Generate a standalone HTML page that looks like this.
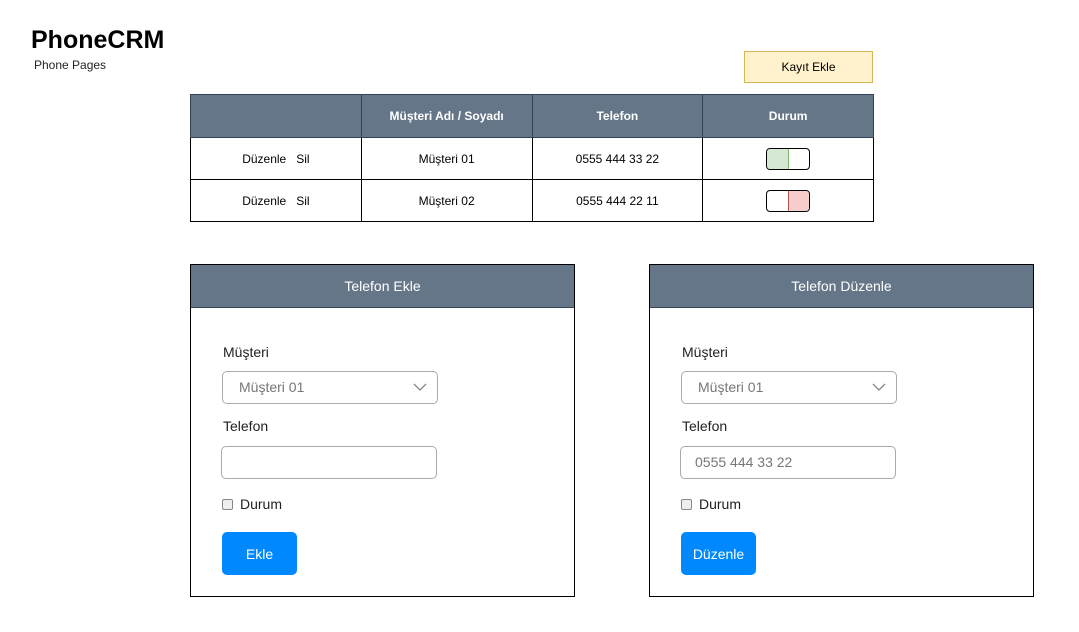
<!DOCTYPE html>
<html><head><meta charset="utf-8"><style>
*{box-sizing:border-box;margin:0;padding:0}
body{width:1079px;height:632px;background:#fff;font-family:"Liberation Sans",sans-serif;position:relative;overflow:hidden;color:#000}
.a{position:absolute}
.title{left:31px;top:26px;font-size:25px;font-weight:bold}
.sub{left:34px;top:58px;font-size:12px;color:#222}
.kayit{left:744px;top:51px;width:129px;height:32px;background:#fff2cc;border:1px solid #d6b656;font-size:12px;display:flex;align-items:center;justify-content:center}
table{position:absolute;left:190px;top:94px;border-collapse:collapse;font-size:12px;table-layout:fixed;width:684px}
td,th{border:1px solid #000;text-align:center;height:42px}
th{background:#647687;color:#fff;font-size:12px;font-weight:bold;height:43px;border-color:#314354}
.tg{display:inline-flex;width:44px;height:22px;border:1px solid #000;border-radius:4px;overflow:hidden;vertical-align:middle}
.tg span{flex:1}
.panel{position:absolute;top:264px;width:385px;height:333px;border:1px solid #000}
.ph{height:43px;background:#647687;color:#fff;font-size:14px;display:flex;align-items:center;justify-content:center;border-bottom:1px solid #314354}
.lbl{position:absolute;font-size:14px;color:#222}
.sel{position:absolute;left:31px;top:106px;width:216px;height:33px;border:1px solid #aaa;border-radius:5px;font-size:14px;color:#777;padding:7px 0 0 16px}
.inp{position:absolute;left:30px;top:181px;width:216px;height:33px;border:1px solid #aaa;border-radius:5px;font-size:14px;color:#777;padding:7px 0 0 14px}
.cb{position:absolute;left:31px;top:234px;width:11px;height:11px;border:1px solid #888;border-radius:2px;background:#eee}
.btn{position:absolute;left:31px;top:267px;width:75px;height:43px;background:#0088ff;border-radius:5px;color:#fff;font-size:14px;display:flex;align-items:center;justify-content:center}
</style></head><body>
<div class="a title">PhoneCRM</div>
<div class="a sub">Phone Pages</div>
<div class="a kayit">Kayıt Ekle</div>
<table>
<tr><th></th><th>Müşteri Adı / Soyadı</th><th>Telefon</th><th>Durum</th></tr>
<tr><td>Düzenle &nbsp; Sil</td><td>Müşteri 01</td><td>0555 444 33 22</td><td><span class="tg"><span style="background:#d5e8d4;border:1px solid #82b366;margin:-1px 0 -1px -1px"></span><span></span></span></td></tr>
<tr><td>Düzenle &nbsp; Sil</td><td>Müşteri 02</td><td>0555 444 22 11</td><td><span class="tg"><span></span><span style="background:#f8cecc;border:1px solid #b85450;margin:-1px -1px -1px 0"></span></span></td></tr>
</table>
<div class="panel" style="left:190px">
<div class="ph">Telefon Ekle</div>
<div class="lbl" style="left:32px;top:79px">Müşteri</div>
<div class="sel">Müşteri 01<svg style="position:absolute;right:10px;top:11px" width="14" height="9"><path d="M1 1L7 7L13 1" fill="none" stroke="#888" stroke-width="1.3"/></svg></div>
<div class="lbl" style="left:32px;top:153px">Telefon</div>
<div class="inp"></div>
<div class="cb"></div>
<div class="lbl" style="left:49px;top:231px">Durum</div>
<div class="btn">Ekle</div>
</div>
<div class="panel" style="left:649px">
<div class="ph">Telefon Düzenle</div>
<div class="lbl" style="left:32px;top:79px">Müşteri</div>
<div class="sel">Müşteri 01<svg style="position:absolute;right:10px;top:11px" width="14" height="9"><path d="M1 1L7 7L13 1" fill="none" stroke="#888" stroke-width="1.3"/></svg></div>
<div class="lbl" style="left:32px;top:153px">Telefon</div>
<div class="inp">0555 444 33 22</div>
<div class="cb"></div>
<div class="lbl" style="left:49px;top:231px">Durum</div>
<div class="btn">Düzenle</div>
</div>
</body></html>
